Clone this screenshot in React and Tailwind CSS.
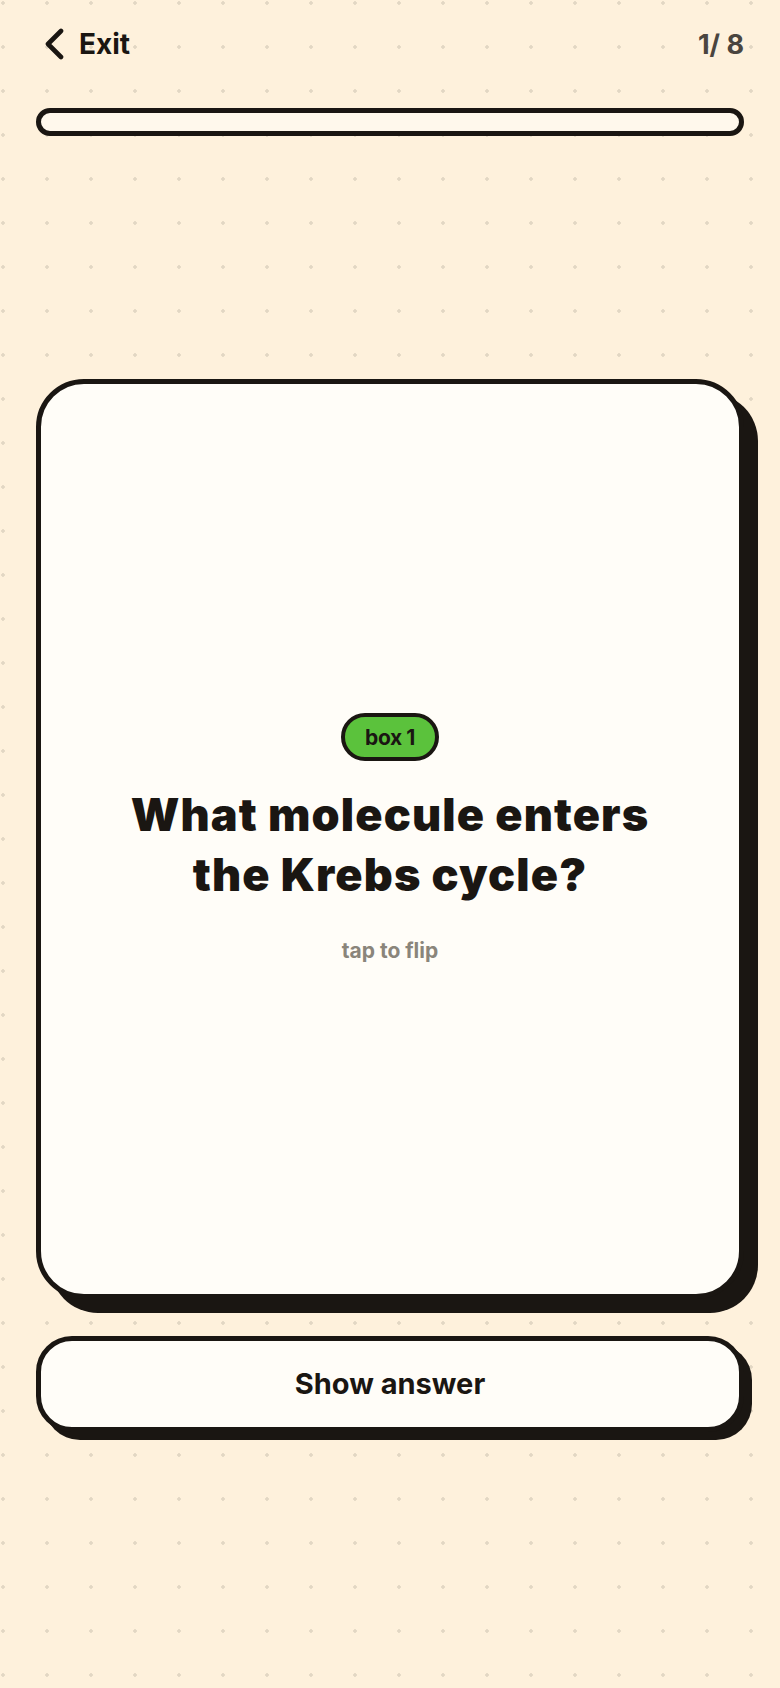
import { useState } from 'react'

const ChevronLeft = () => (
  <svg width="20" height="32" viewBox="0 0 20 32" fill="none" className="shrink-0">
    <polyline
      points="16,3 3,16 16,29"
      stroke="#1a1612"
      strokeWidth="4.6"
      strokeLinecap="round"
      strokeLinejoin="round"
    />
  </svg>
)

const App = () => {
  const [flipped, setFlipped] = useState(false)
  const current = 1
  const total = 8

  return (
    <div className="min-h-screen w-full bg-[#fef1dc] bg-[radial-gradient(circle_at_3px_3px,#e2d7c4_1.5px,transparent_2px)] bg-[size:44px_44px] font-['Inter',sans-serif] text-[#1a1612]">
      <div className="px-9 pt-6">
        {/* Header */}
        <div className="flex h-10 items-center justify-between">
          <button className="flex items-center gap-[14px] pl-[9px]">
            <ChevronLeft />
            <span className="text-[28px] font-bold leading-none">Exit</span>
          </button>
          <span className="text-[27px] font-bold leading-none text-[#4a453f]">
            {current}/{' '}{total}
          </span>
        </div>

        {/* Progress */}
        <div className="mt-[44px] h-[28px] w-full rounded-full border-[5px] border-[#1a1612] bg-[#fff8ec]" />

        {/* Card */}
        <div
          onClick={() => setFlipped(!flipped)}
          className="mt-[243px] flex h-[920px] w-full cursor-pointer flex-col items-center justify-center rounded-[48px] border-[5px] border-[#1a1612] bg-[#fffdf8] px-8 shadow-[14px_14px_0_#1a1612]"
        >
          <div className="flex h-[48px] items-center rounded-full border-[4px] border-[#1a1612] bg-[#5bc23c] px-5 text-[21px] font-bold leading-none tracking-[-0.02em]">
            box 1
          </div>
          <h1 className="mt-6 text-center text-[45px] font-black leading-[60px] tracking-[0.025em]">
            {flipped ? 'Acetyl-CoA' : (
              <>
                What molecule enters
                <br />
                the Krebs cycle?
              </>
            )}
          </h1>
          <p className="mt-8 text-[21px] font-bold leading-7 text-[#8a857b]">tap to flip</p>
        </div>

        {/* Button */}
        <button
          onClick={() => setFlipped(true)}
          className="mt-[37px] flex h-[96px] w-full items-center justify-center rounded-[36px] border-[5px] border-[#1a1612] bg-[#fffdf8] text-[29px] font-bold shadow-[8px_8px_0_#1a1612]"
        >
          Show answer
        </button>
      </div>
    </div>
  )
}

export default App
